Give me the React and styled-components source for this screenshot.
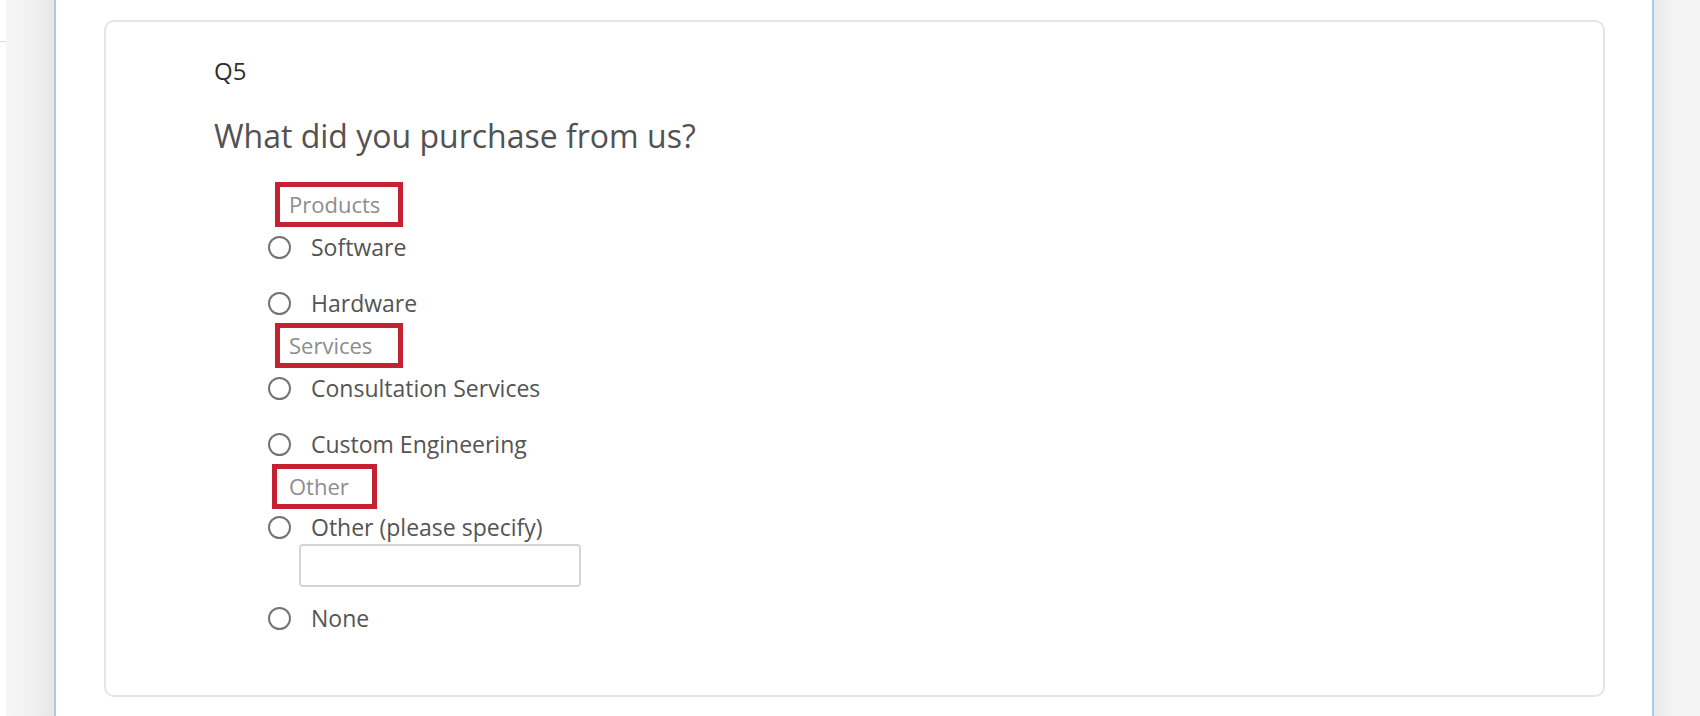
import React from 'react';
import styled, { createGlobalStyle } from 'styled-components';

const groups = [
  { title: 'Products', width: 128, left: 7, choices: [{ label: 'Software' }, { label: 'Hardware' }] },
  { title: 'Services', width: 128, left: 7, choices: [{ label: 'Consultation Services' }, { label: 'Custom Engineering' }] },
  { title: 'Other', width: 105, left: 4, choices: [{ label: 'Other (please specify)', textEntry: true }, { label: 'None' }] },
];

const Survey = () => {
  return (
    <Page>
      <GlobalStyle />
      <LeftRail>
        <RailEdge />
        <RailPanel />
      </LeftRail>
      <Editor>
        <QuestionCard>
          <QuestionNumber>Q5</QuestionNumber>
          <QuestionText>What did you purchase from us?</QuestionText>
          <ChoiceArea>
            {groups.map((group) => (
              <Group key={group.title}>
                <GroupHeader $width={group.width} $left={group.left}>{group.title}</GroupHeader>
                <ChoiceStack>
                  {group.choices.map((choice) => (
                    <Choice key={choice.label}>
                      <ChoiceRow $raised={choice.textEntry}>
                        <Radio type="radio" name="q5" aria-label={choice.label} />
                        <ChoiceLabel>{choice.label}</ChoiceLabel>
                      </ChoiceRow>
                      {choice.textEntry && <TextEntry type="text" />}
                    </Choice>
                  ))}
                </ChoiceStack>
              </Group>
            ))}
          </ChoiceArea>
        </QuestionCard>
      </Editor>
      <RightGutter />
    </Page>
  );
};

const GlobalStyle = createGlobalStyle`
  html, body {
    margin: 0;
    padding: 0;
    background: #fff;
    overflow: hidden;
  }
  body {
    font-family: "Open Sans", "Noto Sans", sans-serif;
  }
`;

const Page = styled.div`
  display: flex;
  width: 1700px;
  height: 716px;
`;

const LeftRail = styled.div`
  display: flex;
  width: 54px;
  flex-shrink: 0;
`;

const RailEdge = styled.div`
  width: 6px;
  background: linear-gradient(to bottom, #fff 41px, #dcdcdc 41px, #dcdcdc 42px, #fff 42px);
`;

const RailPanel = styled.div`
  flex: 1;
  background: linear-gradient(to right, #f6f6f6, #f0f0f0 60%, #e6e6e6);
`;

const Editor = styled.main`
  flex: 1;
  display: flex;
  padding: 20px 47px 19px 48px;
  border-left: 2px solid #a8ccee;
  border-right: 2px solid #a8ccee;
  background: #fff;
`;

const RightGutter = styled.div`
  width: 46px;
  flex-shrink: 0;
  background: linear-gradient(to right, #e9e9e9, #f3f3f3 40%, #f4f4f4);
`;

const QuestionCard = styled.section`
  flex: 1;
  box-sizing: border-box;
  padding: 34px 0 0 108px;
  border: 2px solid #e5e5e5;
  border-radius: 10px;
  background: #fff;
`;

const QuestionNumber = styled.div`
  font-size: 24px;
  line-height: 30px;
  color: #2f2f2f;
`;

const QuestionText = styled.h2`
  margin: 28px 0 0;
  font-size: 32px;
  line-height: 44px;
  font-weight: 400;
  color: #525252;
`;

const ChoiceArea = styled.div`
  margin: 24px 0 0 54px;
  display: flex;
  flex-direction: column;
`;

const Group = styled.div`
  display: flex;
  flex-direction: column;
  align-items: flex-start;
`;

const GroupHeader = styled.div`
  box-sizing: border-box;
  width: ${(p) => p.$width}px;
  height: 45px;
  margin-left: ${(p) => p.$left}px;
  padding-left: ${(p) => 16 - p.$left}px;
  border: 5px solid #c42231;
  font-size: 22px;
  line-height: 35px;
  color: #8d8d8d;
`;

const ChoiceStack = styled.div`
  display: flex;
  flex-direction: column;
  gap: 16px;
`;

const Choice = styled.div`
  display: flex;
  flex-direction: column;
`;

const ChoiceRow = styled.label`
  display: flex;
  align-items: center;
  gap: 20px;
  height: 40px;
  margin-top: ${(p) => (p.$raised ? -2 : 0)}px;
  cursor: pointer;
`;

const Radio = styled.input`
  appearance: none;
  box-sizing: border-box;
  width: 23px;
  height: 23px;
  margin: 0;
  border: 2px solid #747474;
  border-radius: 50%;
  background: #fff;
`;

const ChoiceLabel = styled.span`
  font-size: 23px;
  color: #545454;
`;

const TextEntry = styled.input`
  box-sizing: border-box;
  width: 282px;
  height: 43px;
  margin: -3px 0 -5px 31px;
  border: 2px solid #d5d5d5;
  border-radius: 4px;
  background: #fff;
`;

export default Survey;
